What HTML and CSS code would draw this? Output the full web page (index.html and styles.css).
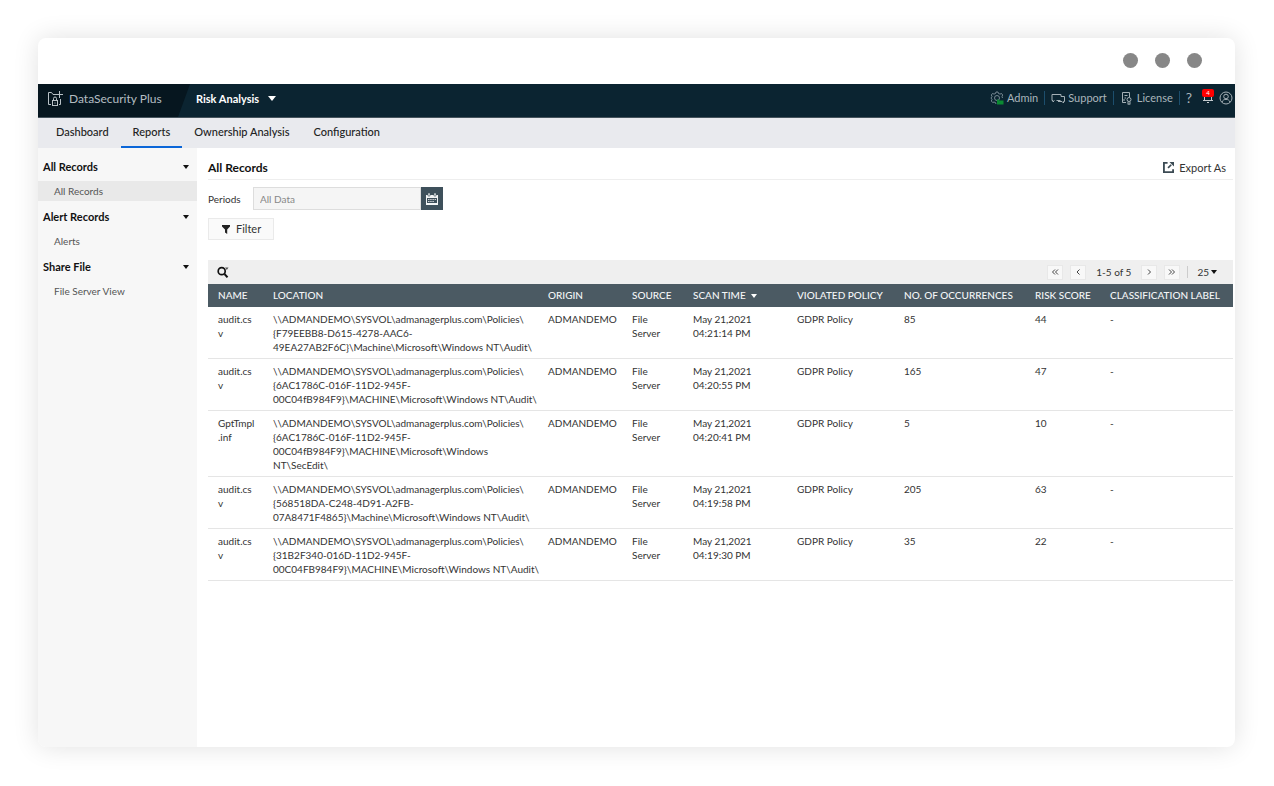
FILE: index.html
```html
<!DOCTYPE html>
<html lang="en">
<head>
<meta charset="utf-8">
<title>DataSecurity Plus - All Records</title>
<link rel="stylesheet" href="styles.css">
</head>
<body>
<div class="window">
  <div class="titlebar"><span class="dot"></span><span class="dot"></span><span class="dot"></span></div>
  <header class="topbar">
    <div class="brand">
      <svg class="brand-icon" viewBox="0 0 17 16" fill="none" stroke="#b9c2c7" stroke-width="1"><path d="M4 13.500H1.500V1.500h3l1.500 2h3M13.500 8v5.500H12"/><path d="M12.500 0v7M9 3.500h7"/><rect x="5.500" y="9.500" width="5" height="5"/><path d="M6.500 9V7.500a1.500 1.500 0 0 1 3 0V9M8 11.500v1"/></svg>
      <span>DataSecurity Plus</span>
    </div>
    <button class="module">Risk Analysis <svg class="caret" viewBox="0 0 8 5"><path d="M0 0h8L4 5z" fill="currentColor"/></svg></button>
    <nav class="tools">
      <a href="#" class="tool"><svg class="ico" viewBox="0 0 14 14" fill="none" stroke="#8fa0a8" stroke-width=".8"><path d="M6 1h2l.5 1.500 1.500.6L11.500 2.500l1.200 1.500-.7 1.500.5 1.500M6 1l-.5 1.500-1.500.6L2.500 2.500 1.300 4 2 5.500 1 7l1 1.500-.7 1.500 1.400 1.500L4 11l1.500.6L6 13"/><circle cx="7" cy="7" r="2.500"/><path d="M7 8.500h1.500l1 1H13.500V13.500H7z" fill="#0b8a32" stroke="none"/></svg>Admin</a>
      <a href="#" class="tool"><svg class="ico" viewBox="0 0 14 14" fill="none" stroke="#a5b0b6"><path d="M3.500 9.500 2 11V9.500H1v-6h9v2"/><path d="M5.500 9.500h4M10 5.500h3.500v5H12.500V12l-1.500-1.500H7"/></svg>Support</a>
      <a href="#" class="tool"><svg class="ico" viewBox="0 0 14 14" fill="none" stroke="#a5b0b6"><path d="M6 11.500H2.500v-10h7V6M4.500 4.500h3M4.500 7h1.500M2.500 9H5"/><circle cx="9" cy="8.500" r="2"/><path d="M8 10.500v3l1-.8 1 .8v-3"/></svg>License</a>
      <a href="#" class="help" aria-label="Help">?</a>
      <button class="bell" aria-label="Notifications"><svg class="ico" viewBox="0 0 14 14" fill="none" stroke="#c3cacd"><path d="M3.500 9.500V5a3.500 3.500 0 0 1 7 0v4.500M2 9.500h10M6 11.500h2"/></svg><span class="badge">4</span></button>
      <button class="user" aria-label="Account"><svg class="ico" viewBox="0 0 14 14" fill="none" stroke="#a5b0b6"><circle cx="7" cy="7" r="6"/><circle cx="7" cy="5.500" r="2.300"/><path d="M3 11.200c.5-2 2-2.800 4-2.800s3.500.8 4 2.800"/></svg></button>
    </nav>
  </header>
  <nav class="tabs">
    <a href="#" class="tab">Dashboard</a>
    <a href="#" class="tab active">Reports</a>
    <a href="#" class="tab">Ownership Analysis</a>
    <a href="#" class="tab">Configuration</a>
  </nav>
  <div class="body">
    <aside class="sidebar">
      <button class="group">All Records <svg class="caret-s" viewBox="0 0 6 4"><path d="M0 0h6L3 4z"/></svg></button>
      <a href="#" class="item selected">All Records</a>
      <button class="group">Alert Records <svg class="caret-s" viewBox="0 0 6 4"><path d="M0 0h6L3 4z"/></svg></button>
      <a href="#" class="item">Alerts</a>
      <button class="group">Share File <svg class="caret-s" viewBox="0 0 6 4"><path d="M0 0h6L3 4z"/></svg></button>
      <a href="#" class="item">File Server View</a>
    </aside>
    <main class="main">
      <div class="heading">
        <h1>All Records</h1>
        <button class="export"><svg class="export-icon" viewBox="0 0 12 12" fill="none" stroke="#3c4b54" stroke-width="2"><path d="M5 1H1v10h10V8"/><path d="M5.500 6.500 9 3" stroke-width="1.800"/><path d="M7 0h5v5z" fill="#3c4b54" stroke="none"/></svg>Export As</button>
      </div>
      <div class="period">
        <label for="period">Periods</label>
        <input id="period" type="text" value="All Data">
        <button class="calendar" aria-label="Pick a date"><svg class="cal-icon" viewBox="0 0 12 12"><path d="M0 2h12v10H0z" fill="#f1f3f4"/><path d="M2 0h2v3H2zM8 0h2v3H8z" fill="#f1f3f4" stroke="#3e505b" stroke-width=".6"/><path d="M1 5h10v5H1z" fill="#3e505b"/><path d="M2 6.500h8M2 8.500h6" stroke="#f1f3f4" stroke-width=".8" stroke-dasharray="1.500 .7"/></svg></button>
      </div>
      <button class="filter"><svg class="funnel" viewBox="0 0 8 9"><path d="M0 0h8v1.500L5.200 4.500V9L3 7.500v-3L0 1.500z" fill="#222"/></svg>Filter</button>
      <div class="gridbar">
        <button class="search" aria-label="Search"><svg class="search-icon" viewBox="0 0 12 12" fill="none" stroke="#111"><circle cx="4.700" cy="5.200" r="3.500" stroke-width="1.700"/><path d="m7.500 8 3 3.300" stroke-width="2"/><path d="M8 1.500h3.500L9.800 4z" fill="#555" stroke="none"/></svg></button>
        <div class="pager">
          <button aria-label="First page"><svg viewBox="0 0 8 8"><path d="M4 1.500 1.500 4 4 6.500M7 1.500 4.500 4 7 6.500"/></svg></button>
          <button aria-label="Previous page"><svg viewBox="0 0 8 8"><path d="M5.500 1.500 3 4l2.500 2.500"/></svg></button>
          <span class="range">1-5 of 5</span>
          <button aria-label="Next page"><svg viewBox="0 0 8 8"><path d="M3 1.500 5.500 4 3 6.500"/></svg></button>
          <button aria-label="Last page"><svg viewBox="0 0 8 8"><path d="M1 1.500 3.500 4 1 6.500M4 1.500 6.500 4 4 6.500"/></svg></button>
          <span class="divider"></span>
          <button class="size">25 <svg class="caret-s" viewBox="0 0 6 4"><path d="M0 0h6L3 4z"/></svg></button>
        </div>
      </div>
      <table class="grid">
        <colgroup><col class="c-name"><col class="c-location"><col class="c-origin"><col class="c-source"><col class="c-time"><col class="c-policy"><col class="c-count"><col class="c-risk"><col class="c-label"></colgroup>
        <thead><tr><th>NAME</th><th>LOCATION</th><th>ORIGIN</th><th>SOURCE</th><th>SCAN TIME <svg class="sort" viewBox="0 0 6 4"><path d="M0 0h6L3 4z"/></svg></th><th>VIOLATED POLICY</th><th>NO. OF OCCURRENCES</th><th>RISK SCORE</th><th>CLASSIFICATION LABEL</th></tr></thead>
        <tbody>
          <tr><td>audit.cs<br>v</td><td>\\ADMANDEMO\SYSVOL\admanagerplus.com\Policies\<br>{F79EEBB8-D615-4278-AAC6-<br>49EA27AB2F6C}\Machine\Microsoft\Windows NT\Audit\</td><td>ADMANDEMO</td><td>File<br>Server</td><td>May 21,2021<br>04:21:14 PM</td><td>GDPR Policy</td><td>85</td><td>44</td><td>-</td></tr>
          <tr><td>audit.cs<br>v</td><td>\\ADMANDEMO\SYSVOL\admanagerplus.com\Policies\<br>{6AC1786C-016F-11D2-945F-<br>00C04fB984F9}\MACHINE\Microsoft\Windows NT\Audit\</td><td>ADMANDEMO</td><td>File<br>Server</td><td>May 21,2021<br>04:20:55 PM</td><td>GDPR Policy</td><td>165</td><td>47</td><td>-</td></tr>
          <tr><td>GptTmpl<br>.inf</td><td>\\ADMANDEMO\SYSVOL\admanagerplus.com\Policies\<br>{6AC1786C-016F-11D2-945F-<br>00C04fB984F9}\MACHINE\Microsoft\Windows<br>NT\SecEdit\</td><td>ADMANDEMO</td><td>File<br>Server</td><td>May 21,2021<br>04:20:41 PM</td><td>GDPR Policy</td><td>5</td><td>10</td><td>-</td></tr>
          <tr><td>audit.cs<br>v</td><td>\\ADMANDEMO\SYSVOL\admanagerplus.com\Policies\<br>{568518DA-C248-4D91-A2FB-<br>07A8471F4865}\Machine\Microsoft\Windows NT\Audit\</td><td>ADMANDEMO</td><td>File<br>Server</td><td>May 21,2021<br>04:19:58 PM</td><td>GDPR Policy</td><td>205</td><td>63</td><td>-</td></tr>
          <tr><td>audit.cs<br>v</td><td>\\ADMANDEMO\SYSVOL\admanagerplus.com\Policies\<br>{31B2F340-016D-11D2-945F-<br>00C04FB984F9}\MACHINE\Microsoft\Windows NT\Audit\</td><td>ADMANDEMO</td><td>File<br>Server</td><td>May 21,2021<br>04:19:30 PM</td><td>GDPR Policy</td><td>35</td><td>22</td><td>-</td></tr>
        </tbody>
      </table>
    </main>
  </div>
</div>
</body>
</html>
```
FILE: styles.css
```css
* { box-sizing: border-box; }
body { margin: 0; min-height: 100vh; padding: 38px 39px 39px 38px; display: flex; background: #fff; font-family: Lato, "Liberation Sans", sans-serif; font-size: 10px; line-height: 14px; color: #333; }
button, input { font: inherit; color: inherit; border: 0; padding: 0; margin: 0; background: none; }
a { color: inherit; text-decoration: none; }
svg { display: block; flex: none; }
.window { flex: 1; min-width: 0; display: flex; flex-direction: column; background: #fff; border-radius: 8px; overflow: hidden; box-shadow: 0 0 26px rgba(0, 0, 0, .12); }
.titlebar { height: 46px; display: flex; justify-content: flex-end; align-items: center; gap: 17px; padding: 0 33px 2px 0; }
.dot { width: 15px; height: 15px; border-radius: 50%; background: #878787; }
.topbar { height: 34px; display: flex; align-items: center; background: #0b2431; border-bottom: 1px solid #46545d; color: #aab5bb; font-size: 12px; }
.brand { align-self: stretch; width: 152px; padding: 0 0 4px 9px; display: flex; align-items: center; gap: 5px; background: #06161f; clip-path: polygon(0 0, 100% 0, 140px 100%, 0 100%); color: #b4bdc2; }
.brand-icon { width: 17px; height: 16px; }
.module { display: flex; align-items: center; gap: 9px; margin-left: 6px; padding-bottom: 4px; color: #fff; font-size: 11px; font-weight: 700; }
.caret { width: 8px; height: 5px; }
.tools { margin-left: auto; display: flex; align-items: center; padding: 0 2px 6px 0; font-size: 11px; }
.tool { display: flex; align-items: center; gap: 3px; padding: 0 6px; line-height: 12px; border-right: 1px solid #1c4e6d; }
.ico { width: 14px; height: 14px; }
.help { padding: 0 9px 0 6px; font-size: 14px; }
.bell { position: relative; margin-right: 4px; }
.badge { position: absolute; top: -2px; left: 1px; width: 12px; height: 8px; border-radius: 2px; background: #f00; color: #fff; font-size: 6px; line-height: 8px; text-align: center; }
.tabs { height: 30px; display: flex; padding-left: 6px; background: #e9eaee; font-size: 11px; font-weight: 500; color: #222; }
.tab { padding: 7px 12px 0; border-bottom: 2px solid transparent; }
.tab.active { border-color: #0b66d8; }
.body { flex: 1; display: flex; }
.sidebar { width: 159px; flex: none; padding-top: 7px; background: #f7f7f7; color: #555; }
.group { width: 100%; display: flex; justify-content: space-between; align-items: center; height: 26px; padding: 0 8px 2px 5px; font-size: 11px; font-weight: 700; color: #111; }
.caret-s { width: 6px; height: 4px; fill: #111; }
.item { display: block; height: 20px; margin-bottom: 4px; padding: 3px 16px 0; }
.item.selected { background: #e9e9e9; }
.main { flex: 1; min-width: 0; padding: 8px 2px 0 11px; }
.heading { display: flex; justify-content: space-between; align-items: center; height: 24px; border-bottom: 1px solid #eee; }
h1 { margin: 0; font-size: 12px; font-weight: 700; color: #111; }
.export { display: flex; align-items: center; gap: 5px; padding-right: 7px; font-size: 11px; }
.export-icon { width: 11px; height: 11px; }
.period { display: flex; align-items: center; margin: 7px 0 8px; }
.period label { width: 45px; }
.period input { width: 168px; height: 23px; padding: 0 6px; border: 1px solid #ddd; background: #f5f5f5; color: #888; }
.calendar { width: 22px; height: 23px; display: grid; place-items: center; background: #3e505b; }
.cal-icon { width: 12px; height: 12px; }
.filter { display: flex; align-items: center; gap: 6px; height: 22px; width: 66px; padding: 0 13px; border: 1px solid #eaeaea; background: #fafafa; font-size: 11px; }
.funnel { width: 8px; height: 9px; }
.gridbar { height: 24px; margin-top: 20px; padding: 0 16px 0 9px; display: flex; justify-content: space-between; align-items: center; background: #efefef; }
.search-icon { width: 12px; height: 12px; }
.pager { display: flex; align-items: center; gap: 7px; }
.pager button { width: 16px; height: 15px; display: grid; place-items: center; background: #f8f8f8; border: 1px solid #e8e8e8; }
.pager button svg { width: 8px; height: 8px; fill: none; stroke: #444; }
.range { padding: 0 3px; }
.divider { width: 1px; height: 12px; background: #ccc; }
.pager .size { width: auto; display: flex; align-items: center; gap: 2px; padding-left: 2px; border: 0; background: none; }
.pager .size svg { width: 6px; height: 4px; fill: #111; stroke: none; }
.grid { width: 100%; table-layout: fixed; border-collapse: separate; border-spacing: 0; }
.grid th { height: 23px; padding: 0 0 1px 10px; background: #4b5a63; color: #f4f6f7; font-size: 10px; font-weight: 500; text-align: left; white-space: nowrap; }
.grid td { padding: 5px 0 4px 10px; border-bottom: 1px solid #e5e5e5; vertical-align: top; white-space: nowrap; }
.sort { display: inline-block; width: 6px; height: 4px; margin-left: 3px; vertical-align: middle; fill: #fff; }
.c-name { width: 55px; }
.c-location { width: 275px; }
.c-origin { width: 84px; }
.c-source { width: 61px; }
.c-time { width: 104px; }
.c-policy { width: 107px; }
.c-count { width: 131px; }
.c-risk { width: 75px; }
.c-label { width: 133px; }
```
